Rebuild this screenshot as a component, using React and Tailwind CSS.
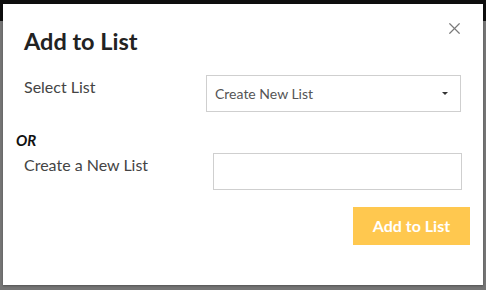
import React from 'react';
import { X } from 'lucide-react';

const App = () => {
  return (
    <div className="relative w-[486px] h-[290px] overflow-hidden bg-[#757575] font-['Lato',_'Liberation_Sans',_sans-serif]">
      {/* page behind the overlay */}
      <div className="h-[21px] bg-[#0e0e0e]" />

      {/* Modal */}
      <div className="absolute left-[3px] top-[4px] w-[480px] h-[281px] bg-white shadow-[0_1px_2px_rgba(0,0,0,0.3)]">
        <button className="absolute right-[19px] top-[15px] text-[#7a7a7a]">
          <X className="w-[19px] h-[19px]" strokeWidth={1.5} />
        </button>

        <div className="pt-[23px] pl-[13px] pr-[13px]">
          <h2 className="pl-[8px] text-[23.5px] leading-[28px] font-bold text-[#222]">Add to List</h2>

          <div className="mt-[20px] flex items-start">
            <label className="pl-[8px] pt-[2px] w-[190px] text-[16px] leading-[20px] text-[#444]">Select List</label>
            <div className="w-[255px] h-[37px] border border-[#cfcfcf] flex items-center justify-between pl-[8px] pr-[12px]">
              <span className="text-[14px] text-[#555]">Create New List</span>
              <span className="w-0 h-0 border-l-[3px] border-r-[3px] border-t-[3px] border-l-transparent border-r-transparent border-t-[#333]" />
            </div>
          </div>

          <div className="mt-[19px] text-[15px] leading-[18px] font-bold italic text-[#111]">OR</div>

          <div className="mt-[4px] flex items-start">
            <label className="pl-[8px] pt-[2px] w-[197px] text-[16px] leading-[20px] text-[#444]">Create a New List</label>
            <input className="w-[249px] h-[37px] border border-[#cfcfcf] outline-none px-2 text-[13px]" />
          </div>

          <div className="mt-[17px] flex justify-end">
            <button className="w-[117px] h-[38px] bg-[#ffc84f] text-white text-[16px] font-bold">Add to List</button>
          </div>
        </div>
      </div>
    </div>
  );
};

export default App;
